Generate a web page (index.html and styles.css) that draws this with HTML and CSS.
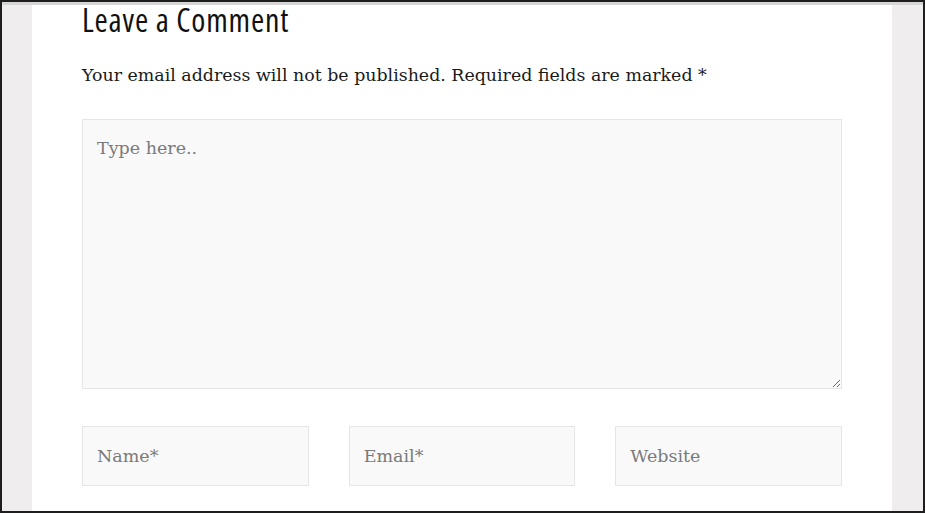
FILE: index.html
```html
<!DOCTYPE html>
<html lang="en">
<head>
<meta charset="utf-8">
<title>Leave a Comment</title>
<link rel="stylesheet" href="styles.css">
</head>
<body>
<div class="frame">
  <div class="topline"></div>
  <div class="page">
    <main class="content">
      <section class="comment-respond">
        <h3 class="reply-title">Leave a Comment</h3>
        <p class="notes">Your email address will not be published. Required fields are marked <span class="req">*</span></p>
        <form class="comment-form">
          <textarea class="comment-text" placeholder="Type here.."></textarea>
          <div class="fields">
            <input class="field" type="text" placeholder="Name*">
            <input class="field" type="email" placeholder="Email*">
            <input class="field" type="url" placeholder="Website">
          </div>
        </form>
      </section>
    </main>
  </div>
</div>
</body>
</html>
```

FILE: styles.css
```css
html, body {
  margin: 0;
  padding: 0;
  height: 100%;
}
body {
  background: #1a1a1a;
}
.frame {
  box-sizing: border-box;
  width: 925px;
  height: 513px;
  border: 2px solid #1e1e1e;
  display: flex;
  flex-direction: column;
  background: #efeded;
  overflow: hidden;
}
.topline {
  height: 3px;
  background: #d6d6d6;
  flex: none;
}
.page {
  flex: 1;
  display: flex;
  padding: 0 31px 0 30px;
}
.content {
  flex: 1;
  background: #ffffff;
  padding: 0 50px;
}
.reply-title {
  margin: 0;
  font-family: "Open Sans", "DejaVu Sans Condensed", sans-serif;
  font-stretch: 75%;
  font-weight: 400;
  font-size: 32px;
  line-height: 30px;
  letter-spacing: 0.8px;
  color: #111111;
}
.notes {
  margin: 26px 0 0;
  font-family: "DejaVu Serif", "Liberation Serif", serif;
  font-size: 17.4px;
  line-height: 28px;
  color: #1a1a1a;
}
.comment-form {
  margin-top: 30px;
}
.comment-text {
  display: block;
  box-sizing: border-box;
  width: 760px;
  height: 270px;
  background: #f9f9f9;
  border: 1px solid #e6e6e6;
  padding: 18px 14px;
  font-family: "DejaVu Serif", "Liberation Serif", serif;
  font-size: 17.5px;
  color: #333;
  resize: vertical;
  margin: 0;
}
.comment-text::placeholder,
.field::placeholder {
  color: #7a7a7a;
  opacity: 1;
}
.fields {
  display: flex;
  gap: 40px;
  margin-top: 37px;
  width: 760px;
}
.field {
  box-sizing: border-box;
  flex: 1;
  min-width: 0;
  height: 60px;
  background: #f9f9f9;
  border: 1px solid #e6e6e6;
  padding: 0 14px;
  font-family: "DejaVu Serif", "Liberation Serif", serif;
  font-size: 17.5px;
  color: #333;
  margin: 0;
}
```
